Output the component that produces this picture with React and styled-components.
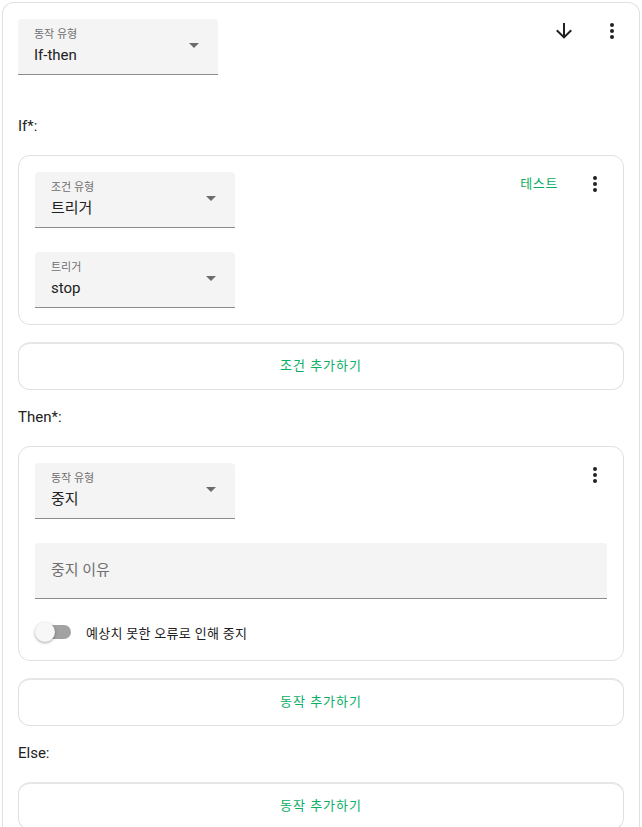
import styled, { createGlobalStyle } from "styled-components";

const GlobalStyle = createGlobalStyle`
  html, body {
    margin: 0;
    padding: 0;
    background: #ffffff;
  }
  body {
    font-family: Roboto, "Noto Sans CJK KR", "Noto Sans", sans-serif;
    color: #212121;
  }
`;

const GREEN = "#0aae62";

const Card = styled.div`
  margin: 2px 2px 0 2px;
  border: 1px solid #e0e0e0;
  border-bottom: none;
  border-radius: 12px 12px 0 0;
  padding: 16px 15px 40px 15px;
  background: #fff;
`;

const InnerCard = styled.div`
  border: 1px solid #e0e0e0;
  border-radius: 12px;
  padding: 16px;
  display: flex;
  flex-direction: column;
  gap: 24px;
`;

const HeaderRow = styled.div`
  display: flex;
  align-items: flex-start;
  justify-content: space-between;
`;

const Actions = styled.div`
  display: flex;
  align-items: center;
  gap: ${(p) => p.$gap || 24}px;
`;

const IconBox = styled.div`
  width: 24px;
  height: 24px;
  display: flex;
  align-items: center;
  justify-content: center;
  color: #212121;
  svg {
    width: 24px;
    height: 24px;
    fill: currentColor;
  }
`;

const TextAction = styled.span`
  font-size: 13px;
  color: ${GREEN};
  letter-spacing: 0.6px;
  line-height: 24px;
`;

const Field = styled.div`
  position: relative;
  width: ${(p) => (p.$full ? "auto" : "200px")};
  height: 56px;
  box-sizing: border-box;
  background: #f4f4f4;
  border-radius: 4px 4px 0 0;
  border-bottom: 1px solid #8c8c8c;
  padding: 0 16px;
  display: flex;
  flex-direction: column;
  justify-content: center;
`;

const FieldLabel = styled.div`
  font-size: 11px;
  color: #6f6f6f;
  line-height: 14px;
  margin-top: -1px;
`;

const FieldValue = styled.div`
  font-size: 15px;
  color: #212121;
  line-height: 20px;
  margin-top: 3px;
`;

const Placeholder = styled.div`
  font-size: 15px;
  color: #6f6f6f;
  margin-bottom: 4px;
`;

const Arrow = styled.div`
  position: absolute;
  right: 19px;
  top: 24px;
  width: 0;
  height: 0;
  border-left: 5px solid transparent;
  border-right: 5px solid transparent;
  border-top: 5px solid #6b6b6b;
`;

const Heading = styled.div`
  font-size: 15px;
  line-height: 24px;
  margin: ${(p) => p.$top}px 0 17px 0;
`;

const AddButton = styled.div`
  margin-top: ${(p) => (p.$flush ? 0 : 17)}px;
  height: 48px;
  box-sizing: border-box;
  border: 1px solid #e0e0e0;
  border-top: 2px solid #e6e6e6;
  border-radius: 12px;
  padding-bottom: 4px;
  display: flex;
  align-items: center;
  justify-content: center;
  font-size: 13px;
  letter-spacing: 1px;
  color: ${GREEN};
`;

const ToggleRow = styled.div`
  display: flex;
  align-items: center;
  gap: 15px;
  height: 24px;
  margin-top: -3px;
`;

const Track = styled.div`
  position: relative;
  width: 34px;
  height: 14px;
  border-radius: 7px;
  background: #a2a2a2;
  margin-left: 2px;
`;

const Thumb = styled.div`
  position: absolute;
  left: -2px;
  top: -3px;
  width: 20px;
  height: 20px;
  border-radius: 50%;
  background: #f7f7f7;
  box-shadow: 0 1px 3px rgba(0, 0, 0, 0.35);
`;

const ToggleLabel = styled.span`
  font-size: 13px;
  color: #212121;
  letter-spacing: 0.3px;
`;

const MoreIcon = () => (
  <IconBox>
    <svg viewBox="0 0 24 24">
      <path d="M12,16A2,2 0 0,1 14,18A2,2 0 0,1 12,20A2,2 0 0,1 10,18A2,2 0 0,1 12,16M12,10A2,2 0 0,1 14,12A2,2 0 0,1 12,14A2,2 0 0,1 10,12A2,2 0 0,1 12,10M12,4A2,2 0 0,1 14,6A2,2 0 0,1 12,8A2,2 0 0,1 10,6A2,2 0 0,1 12,4Z" />
    </svg>
  </IconBox>
);

const DownIcon = () => (
  <IconBox>
    <svg viewBox="0 0 24 24">
      <path d="M11,4H13V16L18.5,10.5L19.92,11.92L12,19.84L4.08,11.92L5.5,10.5L11,16V4Z" />
    </svg>
  </IconBox>
);

const Select = ({ label, value }) => (
  <Field>
    <FieldLabel>{label}</FieldLabel>
    <FieldValue>{value}</FieldValue>
    <Arrow />
  </Field>
);

export default function App() {
  return (
    <>
      <GlobalStyle />
      <Card>
        <HeaderRow>
          <Select label="동작 유형" value="If-then" />
          <Actions>
            <DownIcon />
            <MoreIcon />
          </Actions>
        </HeaderRow>

        <Heading $top={39}>If*:</Heading>
        <InnerCard>
          <HeaderRow>
            <Select label="조건 유형" value="트리거" />
            <Actions $gap={25}>
              <TextAction>테스트</TextAction>
              <MoreIcon />
            </Actions>
          </HeaderRow>
          <Select label="트리거" value="stop" />
        </InnerCard>
        <AddButton>조건 추가하기</AddButton>

        <Heading $top={15}>Then*:</Heading>
        <InnerCard>
          <HeaderRow>
            <Select label="동작 유형" value="중지" />
            <MoreIcon />
          </HeaderRow>
          <Field $full>
            <Placeholder>중지 이유</Placeholder>
          </Field>
          <ToggleRow>
            <Track>
              <Thumb />
            </Track>
            <ToggleLabel>예상치 못한 오류로 인해 중지</ToggleLabel>
          </ToggleRow>
        </InnerCard>
        <AddButton>동작 추가하기</AddButton>

        <Heading $top={15}>Else:</Heading>
        <AddButton $flush>동작 추가하기</AddButton>
      </Card>
    </>
  );
}
